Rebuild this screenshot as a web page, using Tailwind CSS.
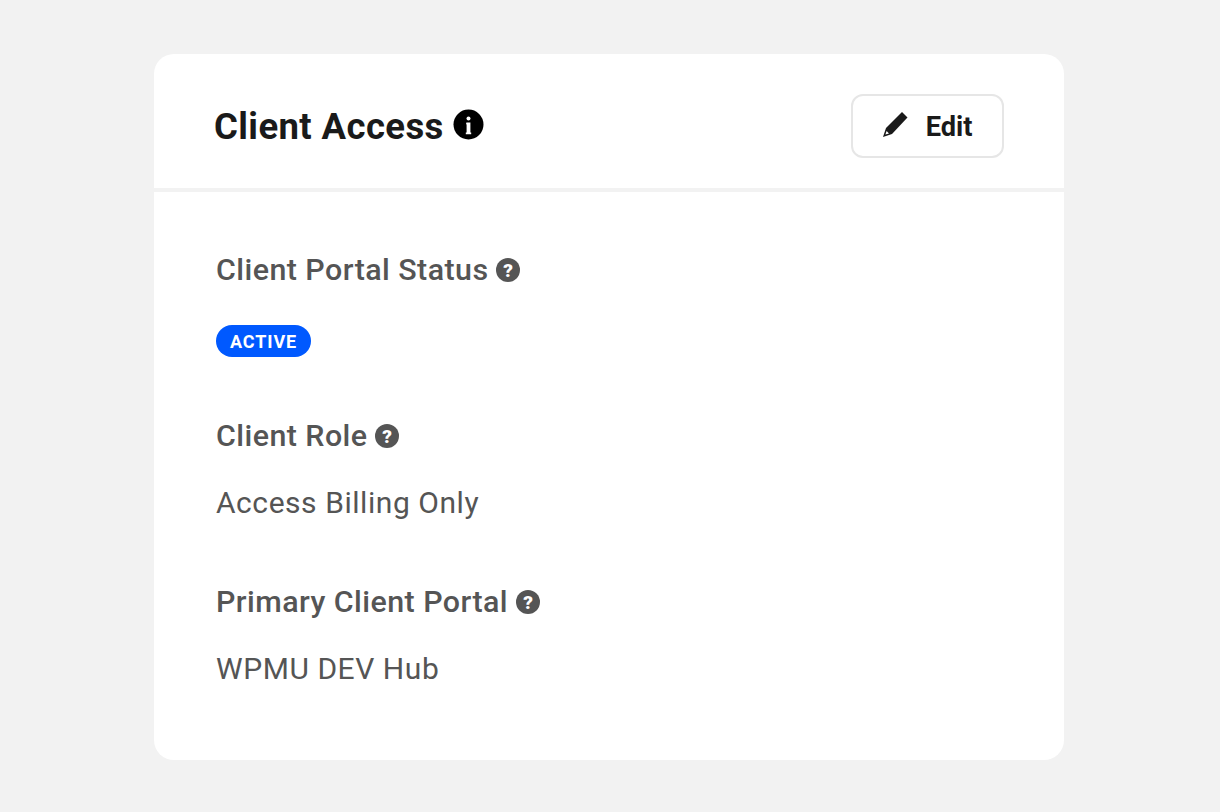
<!DOCTYPE html>
<html lang="en">
<head>
  <meta charset="UTF-8" />
  <title>Client Access</title>
  <script src="https://cdn.jsdelivr.net/npm/@tailwindcss/browser@4"></script>
</head>
<body class="w-[1220px] h-[812px] overflow-hidden bg-[#f2f2f2] font-['Roboto',sans-serif] pt-[54px] pl-[154px]">
  <div class="w-[910px] h-[706px] bg-white rounded-[20px]">
    <div class="h-[138px] border-b-4 border-[#f2f2f2] pl-[60px] pr-[60px] pt-[40px] flex justify-between items-start">
      <div class="flex items-center gap-[9px] h-[64px]">
        <h2 class="text-[36.5px] leading-[64px] mt-[2px] tracking-[0.4px] font-bold text-[#1a1a1a]">Client Access</h2>
        <svg class="w-[31px] h-[31px] -mt-[4px]" viewBox="0 0 31 31">
          <circle cx="15.5" cy="15.5" r="15" fill="#000" />
          <circle cx="15.5" cy="9.5" r="2" fill="#fff" />
          <path d="M13.4 13.5h4v10h.8v1.8h-5.4v-1.8h.8v-8.2h-.6z" fill="#fff" />
        </svg>
      </div>
      <button class="w-[153px] h-[64px] rounded-[12px] border-2 border-[#e6e6e6] bg-white flex items-center justify-center gap-[15px] text-[27.2px] font-bold text-[#1a1a1a]">
        <svg class="w-[28px] h-[28px] -mt-[4px]" viewBox="1 0 28 28">
          <path fill="#1a1a1a" d="M20 2 25.5 7.5 10 24 1 27 4 18z" />
          <path fill="#fff" d="M4.6 21 7 23.4 3.4 24.6z" />
        </svg>
        <span class="mt-[2px]">Edit</span>
      </button>
    </div>
    <div class="pl-[62px] pt-[56px]">
      <div class="h-[44px] flex items-center gap-[7.5px]">
        <h3 class="text-[30.4px] tracking-[0.45px] font-medium text-[#555]">Client Portal Status</h3>
        <svg class="w-[24px] h-[24px]" viewBox="0 0 24 24">
          <circle cx="12" cy="12" r="12" fill="#555" />
          <text x="12" y="19" text-anchor="middle" font-family="Roboto" font-weight="900" font-size="19" fill="#fff">?</text>
        </svg>
      </div>
      <div class="mt-[33px] h-[32px] w-[95px] rounded-full bg-[#0059ff] text-white text-[18px] font-bold tracking-[0.9px] flex items-center justify-center">ACTIVE</div>
      <div class="mt-[57px] h-[44px] flex items-center gap-[7.5px]">
        <h3 class="text-[30.4px] tracking-[0.45px] font-medium text-[#555]">Client Role</h3>
        <svg class="w-[24px] h-[24px]" viewBox="0 0 24 24">
          <circle cx="12" cy="12" r="12" fill="#555" />
          <text x="12" y="19" text-anchor="middle" font-family="Roboto" font-weight="900" font-size="19" fill="#fff">?</text>
        </svg>
      </div>
      <p class="mt-[23px] h-[44px] leading-[44px] text-[30px] tracking-[0.55px] text-[#555]">Access Billing Only</p>
      <div class="mt-[55px] h-[44px] flex items-center gap-[7.5px]">
        <h3 class="text-[30.4px] tracking-[0.45px] font-medium text-[#555]">Primary Client Portal</h3>
        <svg class="w-[24px] h-[24px]" viewBox="0 0 24 24">
          <circle cx="12" cy="12" r="12" fill="#555" />
          <text x="12" y="19" text-anchor="middle" font-family="Roboto" font-weight="900" font-size="19" fill="#fff">?</text>
        </svg>
      </div>
      <p class="mt-[23px] h-[44px] leading-[44px] text-[30px] tracking-[0.55px] text-[#555]">WPMU DEV Hub</p>
    </div>
  </div>
</body>
</html>
